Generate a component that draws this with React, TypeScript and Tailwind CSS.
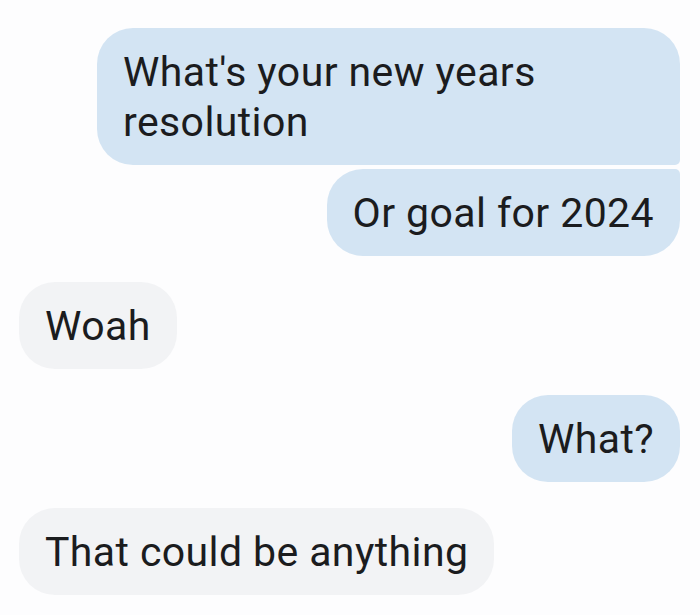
const messages: { text: string; mine: boolean; shape: string; gap: string }[] = [
  { text: "What's your new years resolution", mine: true, shape: 'rounded-[36px] rounded-br-[5px]', gap: 'mt-[28px]' },
  { text: 'Or goal for 2024', mine: true, shape: 'rounded-[36px] rounded-tr-[5px]', gap: 'mt-[4px]' },
  { text: 'Woah', mine: false, shape: 'rounded-[36px]', gap: 'mt-[26px]' },
  { text: 'What?', mine: true, shape: 'rounded-[36px]', gap: 'mt-[26px]' },
  { text: 'That could be anything', mine: false, shape: 'rounded-[36px]', gap: 'mt-[26px]' },
];

export default function App() {
  return (
    <div className="h-[615px] w-[700px] overflow-hidden bg-[#fdfdfe] pl-[19px] pr-[20px] font-['Roboto',sans-serif] text-[#1b1c1e]">
      <div className="flex flex-col">
        {messages.map((m, i) => (
          <div key={i} className={`${m.gap} flex ${m.mine ? 'justify-end' : 'justify-start'}`}>
            <div
              className={`max-w-[583px] px-[26px] py-[18.5px] text-[41px] leading-[50px] tracking-[0.4px] ${m.shape} ${
                m.mine ? 'bg-[#d3e4f3]' : 'bg-[#f2f3f5]'
              }`}
            >
              {m.text}
            </div>
          </div>
        ))}
      </div>
    </div>
  );
}
